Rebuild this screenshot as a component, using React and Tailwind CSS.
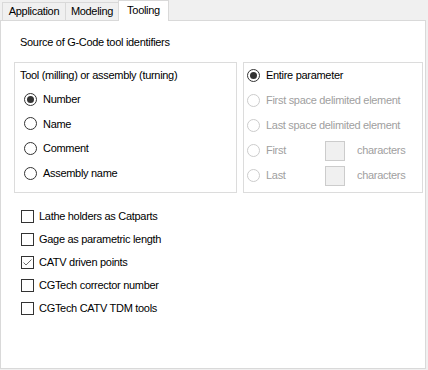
import React from 'react'

const Radio = ({ checked, disabled }) => (
  <span
    className={`flex h-[13px] w-[13px] shrink-0 items-center justify-center rounded-full border bg-white ${
      disabled ? 'border-[#cccccc]' : 'border-[#333333]'
    }`}
  >
    {checked && <span className="h-[7px] w-[7px] rounded-full bg-[#333333]" />}
  </span>
)

const Checkbox = ({ checked }) => (
  <span className="flex h-[13px] w-[13px] shrink-0 items-center justify-center border border-[#333333] bg-white">
    {checked && (
      <svg width="11" height="11" viewBox="0 0 11 11">
        <path d="M1.5 5.5 L4 8 L9.5 2.5" fill="none" stroke="#6e6e6e" strokeWidth="1" />
      </svg>
    )}
  </span>
)

const Tab = ({ label, active, className }) => (
  <div
    className={`flex items-center justify-center border-t border-r border-[#d9d9d9] ${
      active ? 'relative z-10 -mb-px h-[21px] border-l bg-white pb-[2px]' : 'h-[18px] bg-[#f0f0f0]'
    } ${className}`}
  >
    {label}
  </div>
)

export default function App() {
  const leftOptions = ['Number', 'Name', 'Comment', 'Assembly name']
  const checks = [
    ['Lathe holders as Catparts', false],
    ['Gage as parametric length', false],
    ['CATV driven points', true],
    ['CGTech corrector number', false],
    ['CGTech CATV TDM tools', false],
  ]

  return (
    <div className="h-[370px] w-[428px] overflow-hidden bg-[#f0f0f0] font-['Liberation_Sans',Arial,sans-serif] text-[11px] tracking-[-0.3px] text-black">
      <div className="flex h-[20px] items-end pl-[2px]">
        <Tab label="Application" className="w-[64px] border-l" />
        <Tab label="Modeling" className="w-[53px]" />
        <Tab label="Tooling" active className="-ml-px w-[51px]" />
      </div>

      <div className="h-[349px] w-[426px] border border-[#d9d9d9] bg-white pl-[13px] pt-[13px]">
        <div className="ml-[6px] flex h-4 items-center">Source of G-Code tool identifiers</div>

        <div className="mt-[12px] flex gap-[6px]">
          <div className="h-[131px] w-[223px] border border-[#dcdcdc]">
            <div className="flex h-6 items-center pl-[5px]">Tool (milling) or assembly (turning)</div>
            {leftOptions.map((o, i) => (
              <div key={o} className="flex h-[24.67px] items-center pl-[9px]">
                <Radio checked={i === 0} />
                <span className="ml-[6px]">{o}</span>
              </div>
            ))}
          </div>

          <div className="h-[131px] w-[180px] border border-[#dcdcdc]">
            <div className="flex h-[25px] items-center pl-[3px]">
              <Radio checked />
              <span className="ml-[6px]">Entire parameter</span>
            </div>
            <div className="flex h-[25px] items-center pl-[3px] text-[#a0a0a0]">
              <Radio disabled />
              <span className="ml-[6px]">First space delimited element</span>
            </div>
            <div className="flex h-[25px] items-center pl-[3px] text-[#a0a0a0]">
              <Radio disabled />
              <span className="ml-[6px]">Last space delimited element</span>
            </div>
            {['First', 'Last'].map((o) => (
              <div key={o} className="flex h-[25px] items-center pl-[3px] text-[#a0a0a0]">
                <Radio disabled />
                <span className="ml-[6px] w-[59px]">{o}</span>
                <span className="h-[20px] w-[20px] border border-[#cccccc] bg-[#f0f0f0]" />
                <span className="ml-[12px]">characters</span>
              </div>
            ))}
          </div>
        </div>

        <div className="mt-[12px]">
          {checks.map(([label, checked]) => (
            <div key={label} className="flex h-[23px] items-center pl-[7px]">
              <Checkbox checked={checked} />
              <span className="ml-[5px]">{label}</span>
            </div>
          ))}
        </div>
      </div>
    </div>
  )
}
